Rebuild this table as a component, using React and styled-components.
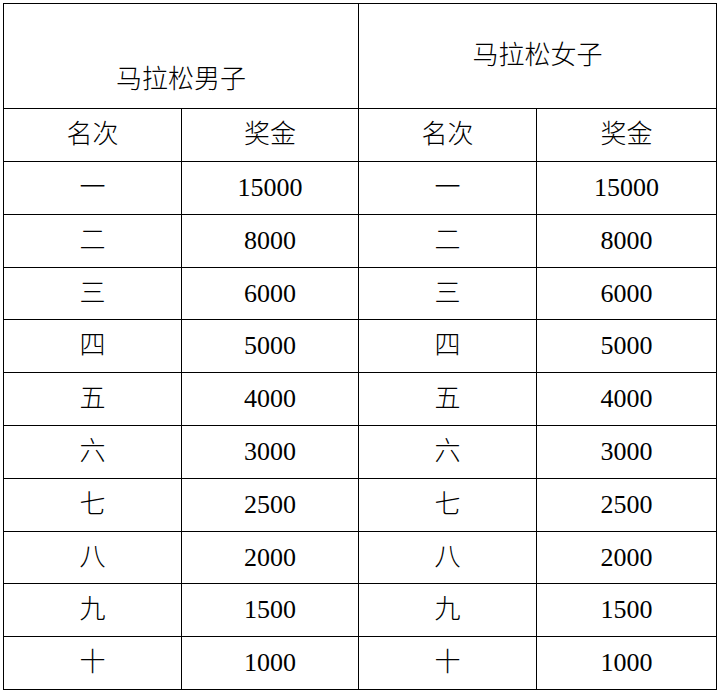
import React from "react";
import styled, { createGlobalStyle } from "styled-components";

const Global = createGlobalStyle`
  html, body { margin: 0; padding: 0; background: #fff; }
  body { font-family: "Liberation Serif", "Noto Sans CJK SC", serif; color: #000; }
`;

const Page = styled.div`
  padding: 3px;
`;

const Grid = styled.div`
  display: grid;
  grid-template-columns: 178px 177px 178px 180px;
  width: max-content;
  border-left: 1px solid #000;
  border-top: 1px solid #000;
`;

const Cell = styled.div`
  box-sizing: border-box;
  grid-column: span ${(p) => p.$span || 1};
  height: ${(p) => p.$h}px;
  border-right: 1px solid #000;
  border-bottom: 1px solid #000;
  display: flex;
  align-items: center;
  justify-content: center;
  padding-top: ${(p) => p.$pt || 0}px;
  font-size: 26px;
  font-weight: 300;
  line-height: 1;
  font-family: "Liberation Serif", "Noto Sans CJK SC", serif;
  color: #000;
`;

const rows = [
  ["一", "15000", 53],
  ["二", "8000", 53],
  ["三", "6000", 52],
  ["四", "5000", 53],
  ["五", "4000", 53],
  ["六", "3000", 53],
  ["七", "2500", 53],
  ["八", "2000", 52],
  ["九", "1500", 53],
  ["十", "1000", 53],
];

export default function App() {
  return (
    <Page>
      <Global />
      <Grid>
        <Cell $span={2} $h={105} $pt={48}>马拉松男子</Cell>
        <Cell $span={2} $h={105}>马拉松女子</Cell>
        <Cell $h={53}>名次</Cell>
        <Cell $h={53}>奖金</Cell>
        <Cell $h={53}>名次</Cell>
        <Cell $h={53}>奖金</Cell>
        {rows.map(([rank, prize, h]) => (
          <React.Fragment key={rank}>
            <Cell $h={h}>{rank}</Cell>
            <Cell $h={h}>{prize}</Cell>
            <Cell $h={h}>{rank}</Cell>
            <Cell $h={h}>{prize}</Cell>
          </React.Fragment>
        ))}
      </Grid>
    </Page>
  );
}
